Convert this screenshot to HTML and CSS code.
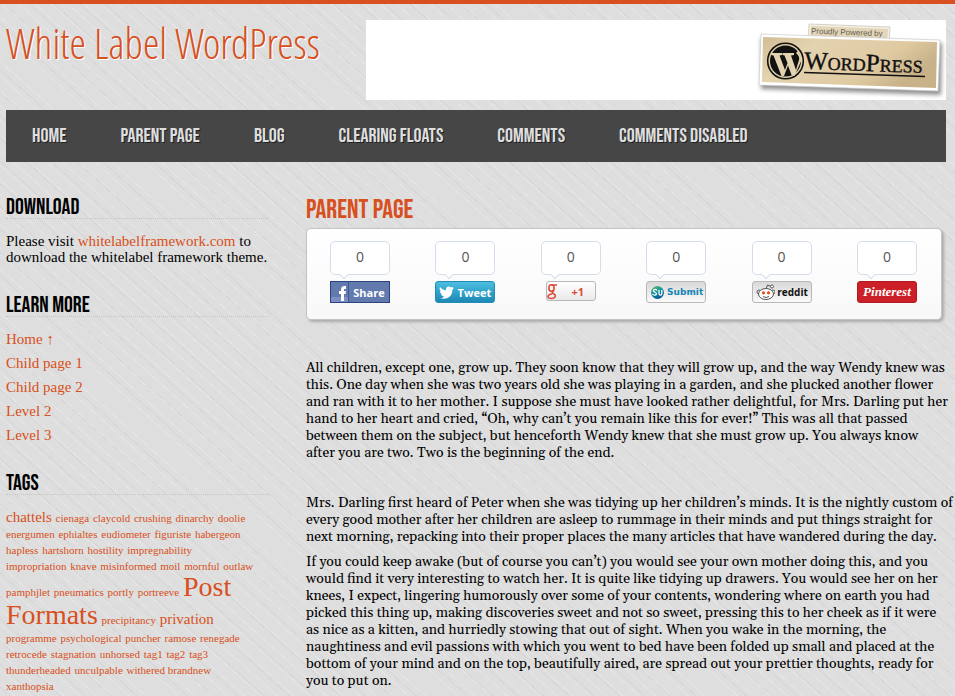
FILE: index.html
```html
<!DOCTYPE html>
<html lang="en">
<head>
<meta charset="utf-8">
<title>White Label WordPress</title>
<link rel="stylesheet" href="styles.css">
</head>
<body>
<div class="page">
  <header class="header">
    <a class="site-title" href="#">White Label WordPress</a>
    <div class="banner">
      <svg class="badge" viewBox="0 0 190 80" role="img" aria-label="Proudly Powered by WordPress">
        <defs>
          <linearGradient id="paper" x1="0" y1="0" x2="1" y2="0.4">
            <stop offset="0" stop-color="#d2bd94"/><stop offset="0.3" stop-color="#e4d3b0"/><stop offset="0.75" stop-color="#dfcaa2"/><stop offset="1" stop-color="#c9b28a"/>
          </linearGradient>
          <filter id="soft" x="-10%" y="-20%" width="120%" height="150%"><feGaussianBlur stdDeviation="2"/></filter>
        </defs>
        <path d="M5 18L186 23L185 75L5 69Z" fill="#555" opacity="0.65" filter="url(#soft)"/>
        <path d="M53 4L134 7L133 24L52 20Z" fill="#f5eee2" stroke="#d6d2cb"/>
        <path d="M55 6L132 9L131 24L54 20Z" fill="#e3d5b9"/>
        <g transform="rotate(2 93 13)"><text x="55" y="15" class="badge-small">Proudly Powered by</text></g>
        <path d="M5 14L184 20L182 71L3 65Z" fill="#fff" stroke="#ccc" stroke-width="0.7"/>
        <path d="M7 17L181 22L180 68L6 62Z" fill="url(#paper)"/>
        <circle cx="29.500" cy="41" r="17.800" fill="none" stroke="#111" stroke-width="1.600"/>
        <circle cx="29.500" cy="41" r="15.500" fill="#111"/>
        <path d="M15 33H26V35L23.500 35.500L29 50L31.500 43L28.500 35.500L26.500 35V33H38V35L35 35.500L40 50L43 40C44 37 42 35 40 33L42 31L46 39L38.500 56L35.500 55L32 45.500L28 56H25.500L17.500 35.500L15 35Z" fill="#e4d3b0"/>
        <g transform="rotate(2 110 50)" class="badge-word"><text x="48" y="51"><tspan class="cap">W</tspan>ORD<tspan class="cap">P</tspan>RESS</text></g>
        <path d="M48 52.500L169 56.500" stroke="#111" stroke-width="1.400"/>
      </svg>
    </div>
  </header>

  <nav class="nav">
    <a href="#">HOME</a>
    <a href="#">PARENT PAGE</a>
    <a href="#">BLOG</a>
    <a href="#">CLEARING FLOATS</a>
    <a href="#">COMMENTS</a>
    <a href="#">COMMENTS DISABLED</a>
  </nav>

  <div class="columns">
    <aside class="sidebar">
      <section class="widget">
        <h2>DOWNLOAD</h2>
        <p>Please visit <a href="#">whitelabelframework.com</a> to download the whitelabel framework theme.</p>
      </section>
      <section class="widget">
        <h2>LEARN MORE</h2>
        <ul>
          <li><a href="#">Home ↑</a></li>
          <li><a href="#">Child page 1</a></li>
          <li><a href="#">Child page 2</a></li>
          <li><a href="#">Level 2</a></li>
          <li><a href="#">Level 3</a></li>
        </ul>
      </section>
      <section class="widget">
        <h2>TAGS</h2>
        <div class="tags">
          <a class="mid" href="#">chattels</a> <a href="#">cienaga</a> <a href="#">claycold</a> <a href="#">crushing</a> <a href="#">dinarchy</a> <a href="#">doolie</a>
          <a href="#">energumen</a> <a href="#">ephialtes</a> <a href="#">eudiometer</a> <a href="#">figuriste</a> <a href="#">habergeon</a>
          <a href="#">hapless</a> <a href="#">hartshorn</a> <a href="#">hostility</a> <a href="#">impregnability</a><br>
          <a href="#">impropriation</a> <a href="#">knave</a> <a href="#">misinformed</a> <a href="#">moil</a> <a href="#">mornful</a> <a href="#">outlaw</a><br>
          <a href="#">pamphjlet</a> <a href="#">pneumatics</a> <a href="#">portly</a> <a href="#">portreeve</a> <a class="big" href="#">Post Formats</a>
          <a href="#">precipitancy</a> <a class="mid" href="#">privation</a><br>
          <a href="#">programme</a> <a href="#">psychological</a> <a href="#">puncher</a> <a href="#">ramose</a> <a href="#">renegade</a>
          <a href="#">retrocede</a> <a href="#">stagnation</a> <a href="#">unhorsed</a> <a href="#">tag1</a> <a href="#">tag2</a> <a href="#">tag3</a><br>
          <a href="#">thunderheaded</a> <a href="#">unculpable</a> <a href="#">withered brandnew</a><br>
          <a href="#">xanthopsia</a>
        </div>
      </section>
    </aside>

    <main class="content">
      <h1>PARENT PAGE</h1>
      <div class="share">
        <div class="share-item">
          <span class="count">0</span>
          <button class="btn facebook" type="button"><svg viewBox="0 0 18 20"><path d="M0 15H17V20H0Z" fill="#7f8dc4"/><path d="M17.500 0V20" stroke="#3d5791"/><path d="M10 19V12H8V9H10V7.500C10 5 11.500 4 13.500 4H15V7H14C13 7 13 7.400 13 8V9H15L14.500 12H13V19Z" fill="#fff"/></svg><span>Share</span></button>
        </div>
        <div class="share-item">
          <span class="count">0</span>
          <button class="btn twitter" type="button"><svg viewBox="0 0 18 20"><path d="M4 5C6 7.500 8 8 10 8.500C9.500 5 12.500 3.500 15 5.500L17.500 4.700L16.500 6.500L18 6.300L16.300 8C16.500 14 11 18.500 4 16C6 16 7 15.500 8 14.500C6 14.200 5.300 13.300 5 12.300H6.300C4.500 11.500 4 10.500 4 9L5 9.400C3.500 8 3.300 6.500 4 5Z" fill="#fff"/></svg><span>Tweet</span></button>
        </div>
        <div class="share-item">
          <span class="count">0</span>
          <button class="btn google" type="button" aria-label="Google +1"><svg viewBox="0 0 14 18"><g fill="none" stroke="#dc4a38"><ellipse cx="4.500" cy="6" rx="2.600" ry="3.200" stroke-width="1.600"/><path d="M4 3H10M7 9C4 10.500 5 11 7 12C10 14 7.500 16.500 4.500 16.500C-0.500 16.500 0 12.500 5 12" stroke-width="1.600"/></g></svg><span>+1</span></button>
        </div>
        <div class="share-item">
          <span class="count">0</span>
          <button class="btn stumble" type="button"><svg viewBox="0 0 18 20"><defs><linearGradient id="su" x1="0" y1="0" x2="0.400" y2="1"><stop offset="0" stop-color="#65c04c"/><stop offset="0.500" stop-color="#1595a0"/><stop offset="1" stop-color="#075c97"/></linearGradient></defs><circle cx="10.500" cy="10.500" r="6.500" fill="url(#su)"/><path d="M10 8.500C9 6.800 6.500 7.300 6.500 8.900C6.700 10.500 9.600 10 9.500 12C9 13.600 6.500 13.500 5.500 12M12 8V11.500C12.200 13.800 14.800 13.500 14.800 11.500V8" fill="none" stroke="#fff" stroke-width="1.300"/></svg><span>Submit</span></button>
        </div>
        <div class="share-item">
          <span class="count">0</span>
          <button class="btn reddit" type="button"><svg viewBox="0 0 22 20"><g fill="#fff" stroke="#555"><circle cx="6" cy="10" r="2"/><circle cx="20" cy="10" r="2"/><path d="M13 7L14.500 3L18 4.500" fill="none"/><circle cx="19" cy="4.500" r="1.500"/><ellipse cx="13" cy="12" rx="7.500" ry="5.500"/></g><circle cx="10.500" cy="10.800" r="1.600" fill="#f04a12"/><circle cx="15.500" cy="10.800" r="1.600" fill="#f04a12"/><path d="M10 14.500Q13 16.500 16 14.500" fill="none" stroke="#555"/></svg><span>reddit</span></button>
        </div>
        <div class="share-item">
          <span class="count">0</span>
          <button class="btn pinterest" type="button"><span>Pinterest</span></button>
        </div>
      </div>
      <article class="story">
        <p>All children, except one, grow up. They soon know that they will grow up, and the way Wendy knew was this. One day when she was two years old she was playing in a garden, and she plucked another flower and ran with it to her mother. I suppose she must have looked rather delightful, for Mrs. Darling put her hand to her heart and cried, “Oh, why can’t you remain like this for ever!” This was all that passed between them on the subject, but henceforth Wendy knew that she must grow up. You always know after you are two. Two is the beginning of the end.</p>
        <p class="spaced">Mrs. Darling first heard of Peter when she was tidying up her children’s minds. It is the nightly custom of every good mother after her children are asleep to rummage in their minds and put things straight for next morning, repacking into their proper places the many articles that have wandered during the day.</p>
        <p>If you could keep awake (but of course you can’t) you would see your own mother doing this, and you would find it very interesting to watch her. It is quite like tidying up drawers. You would see her on her knees, I expect, lingering humorously over some of your contents, wondering where on earth you had picked this thing up, making discoveries sweet and not so sweet, pressing this to her cheek as if it were as nice as a kitten, and hurriedly stowing that out of sight. When you wake in the morning, the naughtiness and evil passions with which you went to bed have been folded up small and placed at the bottom of your mind and on the top, beautifully aired, are spread out your prettier thoughts, ready for you to put on.</p>
      </article>
    </main>
  </div>
</div>
</body>
</html>
```
FILE: styles.css
```css
* { box-sizing: border-box; }

body {
  margin: 0;
  border-top: 4px solid #d84f20;
  color: #000;
  font-family: "Liberation Serif", "Times New Roman", serif;
  font-size: 15px;
  line-height: 16px;
  background-color: #dedede;
  background-image:
    repeating-linear-gradient(42deg, transparent 0 5px, rgba(255, 255, 255, 0.2) 5px 6px, transparent 6px 11px),
    repeating-linear-gradient(42deg, transparent 0 7px, rgba(160, 160, 160, 0.12) 7px 8px, transparent 8px 17px);
}

a { color: #d84f20; text-decoration: none; }

h1, h2, p, ul { margin: 0; padding: 0; }

.page { padding: 16px 9px 0 6px; }

.header { display: flex; justify-content: space-between; height: 80px; }

.site-title {
  font-family: "Open Sans Condensed Light", "Open Sans Condensed", "Liberation Sans Narrow", sans-serif;
  font-weight: 300;
  font-size: 42px;
  line-height: 45px;
  white-space: nowrap;
  text-shadow: 1px 1px 0 #fff;
}

.banner { display: flex; justify-content: flex-end; width: 580px; background: #fff; }

.badge { width: 190px; height: 80px; }

.badge-small { font: 8px "Liberation Sans", sans-serif; fill: #665e50; }

.badge-word { font: 18px "Liberation Serif", serif; fill: #111; stroke: #111; stroke-width: 0.4px; }

.badge-word .cap { font-size: 25px; }

.nav, h1, h2 {
  font-family: "Bebas Neue", "Liberation Sans Narrow", sans-serif;
  font-weight: normal;
}

.nav {
  display: flex;
  gap: 54px;
  margin-top: 10px;
  padding: 0 26px;
  background: #464646;
  font-size: 20px;
  line-height: 52px;
}

.nav a { color: #dedede; white-space: nowrap; text-shadow: 1px 1px 0 #222; }

.columns { display: flex; gap: 38px; margin-top: 32px; }

.sidebar { flex: 0 0 262px; }

.widget { margin-bottom: 27px; }

.widget h2 {
  margin-bottom: 14px;
  padding-top: 4px;
  border-bottom: 1px dotted #c4c4c4;
  font-size: 22px;
  line-height: 20px;
}

.widget ul { list-style: none; line-height: 24px; margin: -4px 0; }

.tags { font-size: 15px; line-height: 16px; }

.tags a { font-size: 11px; line-height: 11px; }

.tags .mid { font-size: 15px; }

.tags .big { font-size: 28px; line-height: 28px; }

.content { flex: 1; min-width: 0; }

.content h1 { color: #d84f20; font-size: 27px; line-height: 32px; margin-bottom: 2px; }

.share {
  display: flex;
  justify-content: space-between;
  height: 92px;
  margin-right: 4px;
  padding: 12px 24px 12px 23px;
  border: 1px solid #c4c4c4;
  border-radius: 5px;
  background: linear-gradient(#fff, #f8f8f8);
  box-shadow: 2px 2px 3px #aaa;
}

.share-item { display: flex; flex-direction: column; align-items: center; gap: 6px; width: 60px; }

.count {
  position: relative;
  width: 60px;
  height: 34px;
  border: 1px solid #d5dcec;
  border-radius: 5px;
  background: #fff;
  color: #555;
  font: 14px/30px "Open Sans", sans-serif;
  text-align: center;
}

.count::after {
  content: "";
  position: absolute;
  left: 10px;
  bottom: -4px;
  width: 5px;
  height: 5px;
  border: solid #d5dcec;
  border-width: 0 1px 1px 0;
  background: #fff;
  transform: rotate(45deg);
}

.btn {
  display: flex;
  align-items: center;
  justify-content: center;
  width: 60px;
  height: 22px;
  padding: 0;
  border: 1px solid #b8b8b8;
  border-radius: 3px;
  background: linear-gradient(#d8d8d8, #fafafa);
  font: bold 11px "Open Sans", sans-serif;
}

.btn svg { flex: none; height: 20px; }

.btn span { flex: 1; text-align: center; }

.facebook { border-color: #29447e; border-radius: 0; background: #627aad; color: #fff; }

.twitter { border-color: #208db4; background: linear-gradient(#4cbde0, #1c88b5); color: #fff; }

.google { width: 50px; height: 20px; background: linear-gradient(#fff, #e9e9e9); color: #dc4a38; }

.google svg { height: 18px; }

.stumble { color: #1585b5; font: bold 9px "DejaVu Sans", sans-serif; }

.reddit { color: #111; font-size: 10px; }

.pinterest { border-color: #b7181d; background: #cb2027; color: #fff; font: italic bold 13px "Liberation Serif", serif; }

.story { margin: 40px -3px 0 0; font-family: "Gelasio", "Georgia", "Liberation Serif", serif; font-size: 14px; line-height: 17px; }

.story p { margin-bottom: 8px; }

.story .spaced { margin: 33px -5px 8px 0; }
```
